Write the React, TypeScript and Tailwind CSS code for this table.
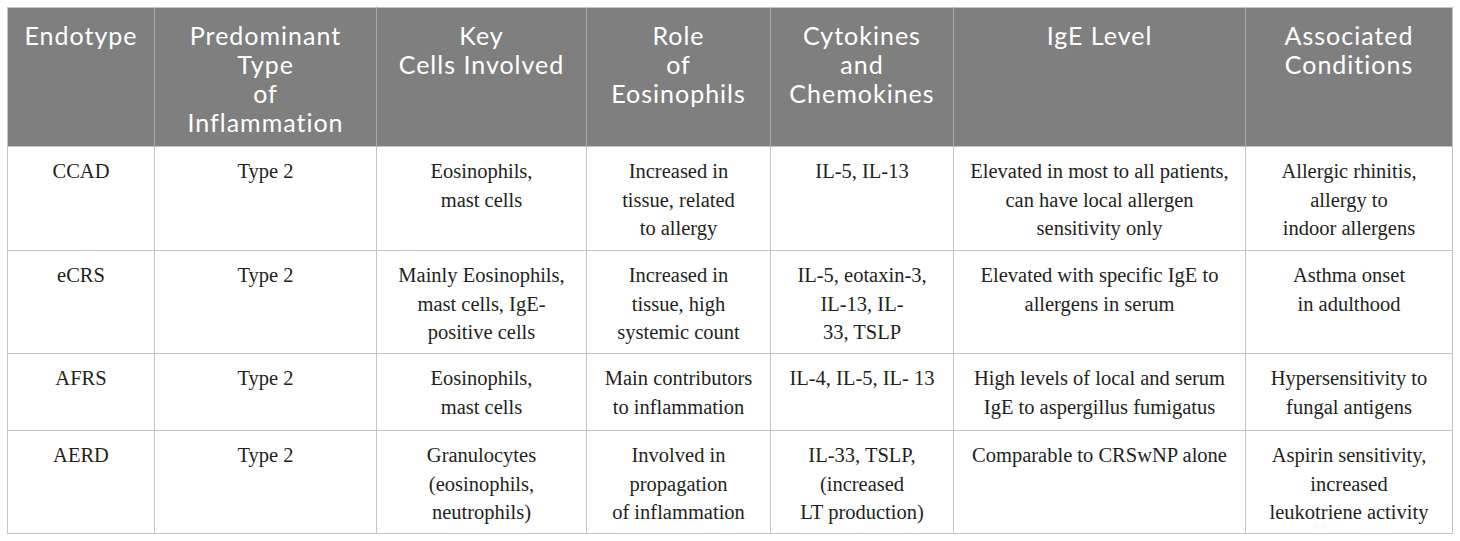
const headers = [
  ['Endotype'],
  ['Predominant', 'Type', 'of', 'Inflammation'],
  ['Key', 'Cells Involved'],
  ['Role', 'of', 'Eosinophils'],
  ['Cytokines', 'and', 'Chemokines'],
  ['IgE Level'],
  ['Associated', 'Conditions'],
];

const colWidths = ['w-[147px]', 'w-[222px]', 'w-[210px]', 'w-[184px]', 'w-[183px]', 'w-[292px]', 'w-[207px]'];

const rows = [
  {
    height: 'h-[104px]',
    cells: [
      ['CCAD'],
      ['Type 2'],
      ['Eosinophils,', 'mast cells'],
      ['Increased in', 'tissue, related', 'to allergy'],
      ['IL-5, IL-13'],
      ['Elevated in most to all patients,', 'can have local allergen', 'sensitivity only'],
      ['Allergic rhinitis,', 'allergy to', 'indoor allergens'],
    ],
  },
  {
    height: 'h-[103px]',
    cells: [
      ['eCRS'],
      ['Type 2'],
      ['Mainly Eosinophils,', 'mast cells, IgE-', 'positive cells'],
      ['Increased in', 'tissue, high', 'systemic count'],
      ['IL-5, eotaxin-3,', 'IL-13, IL-', '33, TSLP'],
      ['Elevated with specific IgE to', 'allergens in serum'],
      ['Asthma onset', 'in adulthood'],
    ],
  },
  {
    height: 'h-[77px]',
    cells: [
      ['AFRS'],
      ['Type 2'],
      ['Eosinophils,', 'mast cells'],
      ['Main contributors', 'to inflammation'],
      ['IL-4, IL-5, IL- 13'],
      ['High levels of local and serum', 'IgE to aspergillus fumigatus'],
      ['Hypersensitivity to', 'fungal antigens'],
    ],
  },
  {
    height: 'h-[103px]',
    cells: [
      ['AERD'],
      ['Type 2'],
      ['Granulocytes', '(eosinophils,', 'neutrophils)'],
      ['Involved in', 'propagation', 'of inflammation'],
      ['IL-33, TSLP,', '(increased', 'LT production)'],
      ['Comparable to CRSwNP alone'],
      ['Aspirin sensitivity,', 'increased', 'leukotriene activity'],
    ],
  },
];

export default function App() {
  return (
    <div className="w-[1460px] h-[541px] bg-white pt-[7px] pl-[7px]">
      <table className="table-fixed border-collapse w-[1445px] border border-[#c4c4c4]">
        <thead>
          <tr className="h-[139px] bg-[#7f7f7f]">
            {headers.map((lines, i) => (
              <th
                key={i}
                className={`${colWidths[i]} align-top text-center font-normal text-white text-[25px] leading-[29px] tracking-[1px] pt-[13px] px-1 border-l border-[#a9a9a9] first:border-l-0 font-['Lato','Open_Sans',sans-serif]`}
              >
                {lines.map((l) => (
                  <div key={l} className="whitespace-nowrap">{l}</div>
                ))}
              </th>
            ))}
          </tr>
        </thead>
        <tbody>
          {rows.map((row, r) => (
            <tr key={r} className={row.height}>
              {row.cells.map((lines, i) => (
                <td
                  key={i}
                  className="align-top text-center text-[#231f20] text-[20.5px] leading-[28.5px] pt-[10px] px-1 border border-[#c4c4c4] font-['Liberation_Serif','Times_New_Roman',serif]"
                >
                  {lines.map((l) => (
                    <div key={l} className="whitespace-nowrap">{l}</div>
                  ))}
                </td>
              ))}
            </tr>
          ))}
        </tbody>
      </table>
    </div>
  );
}
